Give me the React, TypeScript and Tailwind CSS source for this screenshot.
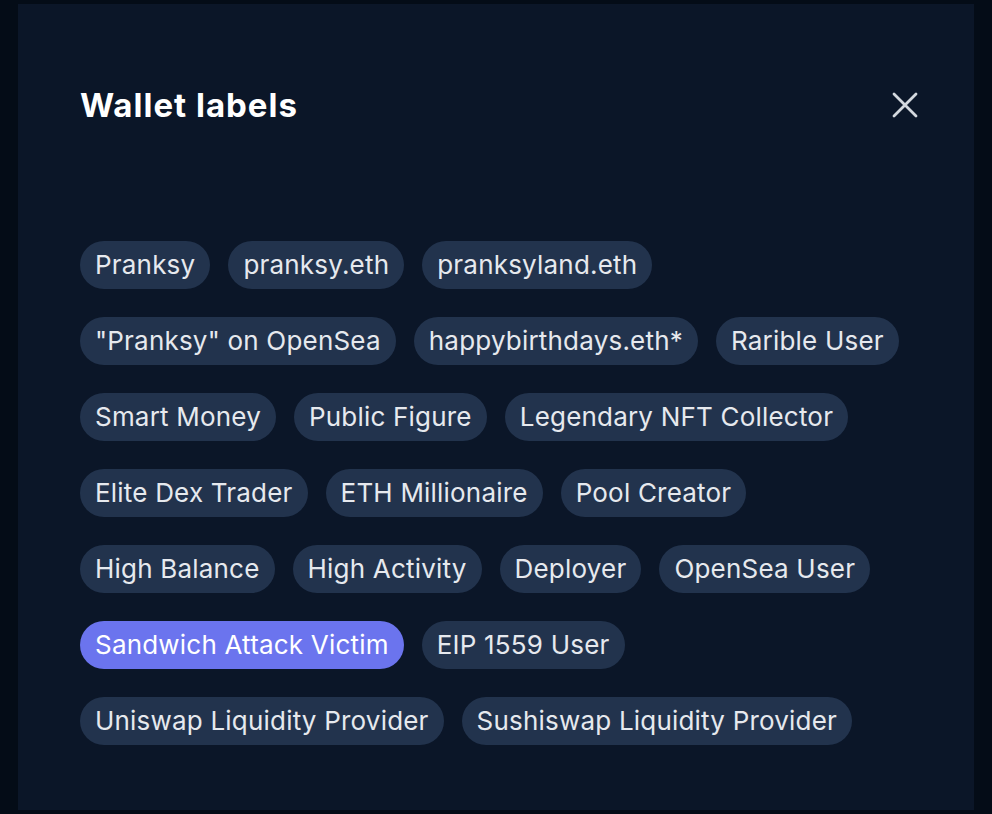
import React from "react";

const labels: string[][] = [
  ["Pranksy", "pranksy.eth", "pranksyland.eth"],
  ['"Pranksy" on OpenSea', "happybirthdays.eth*", "Rarible User"],
  ["Smart Money", "Public Figure", "Legendary NFT Collector"],
  ["Elite Dex Trader", "ETH Millionaire", "Pool Creator"],
  ["High Balance", "High Activity", "Deployer", "OpenSea User"],
  ["Sandwich Attack Victim", "EIP 1559 User"],
  ["Uniswap Liquidity Provider", "Sushiswap Liquidity Provider"],
];

export default function App() {
  return (
    <div
      className="w-[992px] h-[814px] bg-[#040c17] px-[18px] pt-[4px] pb-[4px]"
      style={{ fontFamily: "Inter, 'Noto Sans', sans-serif" }}
    >
      <div className="h-full bg-[#0b1628] pl-[62px] pr-[56px] pt-[81px]">
        <div className="flex items-center justify-between h-[40px]">
          <h1 className="text-[33px] leading-[40px] font-bold text-white tracking-[1px]">
            Wallet labels
          </h1>
          <svg width="26" height="26" viewBox="0 0 26 26" className="text-[#d4d8de]">
            <path d="M2 2 L24 24 M24 2 L2 24" stroke="currentColor" strokeWidth="2.8" strokeLinecap="round" />
          </svg>
        </div>
        <div className="mt-[116px] flex flex-col gap-[28px]">
          {labels.map((row, i) => (
            <div key={i} className="flex gap-[18px]">
              {row.map((l) => (
                <span
                  key={l}
                  className={
                    "h-[48px] px-[15px] rounded-full flex items-center text-[26px] leading-none whitespace-nowrap tracking-[0.2px] " +
                    (l === "Sandwich Attack Victim"
                      ? "bg-[#6b74ee] text-white"
                      : "bg-[#22334d] text-[#e6e9ee]")
                  }
                >
                  {l}
                </span>
              ))}
            </div>
          ))}
        </div>
      </div>
    </div>
  );
}
